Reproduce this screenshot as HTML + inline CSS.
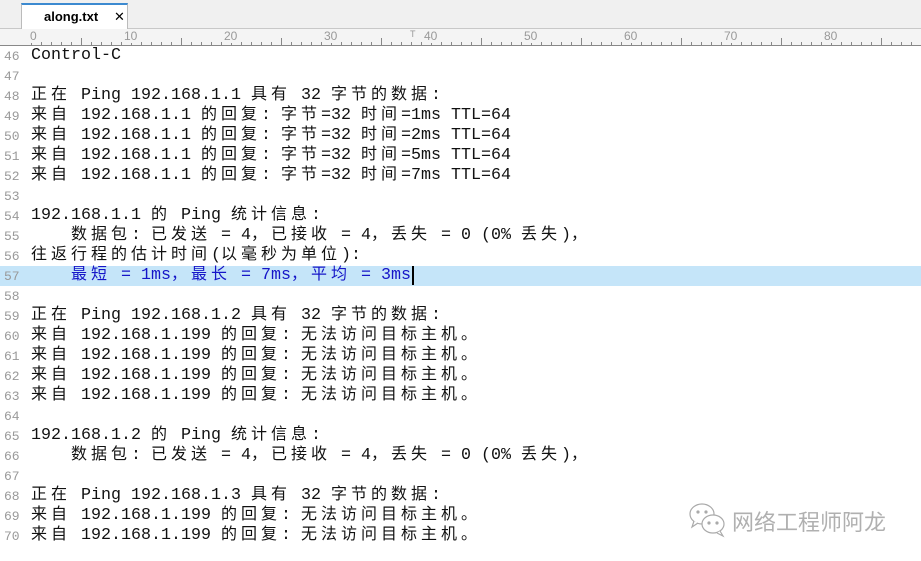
<!DOCTYPE html>
<html><head><meta charset="utf-8"><style>
body{margin:0;width:921px;height:561px;background:#fff;overflow:hidden;position:relative;font-family:"Liberation Mono","Noto Sans CJK SC",monospace}
.top{position:absolute;left:0;top:0;width:921px;height:28px;background:#f0f0f0;border-bottom:1px solid #c8c8c8}
.tab{position:absolute;left:21px;top:3px;width:107px;height:26px;background:#fff;border-top:2px solid #3c8ad0;border-left:1px solid #bbb;border-right:1px solid #bbb;box-sizing:border-box;font:bold 13px "Liberation Sans",sans-serif;color:#000}
.tab span{position:absolute;left:22px;top:4px}
.tab b{position:absolute;left:92px;top:4px;font-weight:normal;font-size:13px}
.ruler{position:absolute;left:0;top:29px;width:921px;height:16px;background:#f4f4f4;border-bottom:1px solid #888}
.ticks{position:absolute;left:31px;bottom:0;width:890px;height:3px;background:repeating-linear-gradient(90deg,#888 0,#888 1px,transparent 1px,transparent 10px)}
.ticks5{position:absolute;left:81px;bottom:0;width:840px;height:7px;background:repeating-linear-gradient(90deg,#888 0,#888 1px,transparent 1px,transparent 100px)}
.rl{position:absolute;top:0;font:12px "Liberation Sans",sans-serif;color:#999;background:#f4f4f4;padding:0 1px}
.code{position:absolute;left:0;top:46px;width:921px}
.ln{height:20px;line-height:20px;position:relative;white-space:pre;font-size:16.67px;color:#111}
.ln .n{position:absolute;left:4px;top:1px;font-size:13px;color:#999;width:24px}
.ln .t{position:absolute;left:31px;top:0;height:20px;line-height:20px}
i{font-style:normal;font-family:"Noto Sans CJK SC",sans-serif;font-size:16px;letter-spacing:4px;line-height:10px}
.hl{background:#c5e5f9}
.hl .t{color:#1515c8}
.wm{position:absolute;left:732px;top:505px;color:#b0b0b0;font:22px "Noto Sans CJK SC",sans-serif}
</style></head><body>
<div class="top"><div class="tab"><span>along.txt</span><b>✕</b></div></div>
<div class="ruler"><div class="ticks"></div><div class="ticks5"></div>
<div class="rl" style="left:29px">0</div><div class="rl" style="left:123px">10</div><div class="rl" style="left:223px">20</div><div class="rl" style="left:323px">30</div><div class="rl" style="left:423px">40</div><div class="rl" style="left:523px">50</div><div class="rl" style="left:623px">60</div><div class="rl" style="left:723px">70</div><div class="rl" style="left:823px">80</div><div class="rl" style="left:409px;font-size:9px">T</div></div>
<div class="code">
<div class="ln"><span class="n">46</span><span class="t">Control-C</span></div>
<div class="ln"><span class="n">47</span></div>
<div class="ln"><span class="n">48</span><span class="t"><i>正在</i> Ping 192.168.1.1 <i>具有</i> 32 <i>字节的数据</i>:</span></div>
<div class="ln"><span class="n">49</span><span class="t"><i>来自</i> 192.168.1.1 <i>的回复</i>: <i>字节</i>=32 <i>时间</i>=1ms TTL=64</span></div>
<div class="ln"><span class="n">50</span><span class="t"><i>来自</i> 192.168.1.1 <i>的回复</i>: <i>字节</i>=32 <i>时间</i>=2ms TTL=64</span></div>
<div class="ln"><span class="n">51</span><span class="t"><i>来自</i> 192.168.1.1 <i>的回复</i>: <i>字节</i>=32 <i>时间</i>=5ms TTL=64</span></div>
<div class="ln"><span class="n">52</span><span class="t"><i>来自</i> 192.168.1.1 <i>的回复</i>: <i>字节</i>=32 <i>时间</i>=7ms TTL=64</span></div>
<div class="ln"><span class="n">53</span></div>
<div class="ln"><span class="n">54</span><span class="t">192.168.1.1 <i>的</i> Ping <i>统计信息</i>:</span></div>
<div class="ln"><span class="n">55</span><span class="t">    <i>数据包</i>: <i>已发送</i> = 4<i>，已接收</i> = 4<i>，丢失</i> = 0 (0% <i>丢失</i>)<i>，</i></span></div>
<div class="ln"><span class="n">56</span><span class="t"><i>往返行程的估计时间</i>(<i>以毫秒为单位</i>):</span></div>
<div class="ln hl"><span class="n">57</span><span class="t">    <i>最短</i> = 1ms<i>，最长</i> = 7ms<i>，平均</i> = 3ms<span style="border-left:2px solid #000;margin-left:1px"></span></span></div>
<div class="ln"><span class="n">58</span></div>
<div class="ln"><span class="n">59</span><span class="t"><i>正在</i> Ping 192.168.1.2 <i>具有</i> 32 <i>字节的数据</i>:</span></div>
<div class="ln"><span class="n">60</span><span class="t"><i>来自</i> 192.168.1.199 <i>的回复</i>: <i>无法访问目标主机。</i></span></div>
<div class="ln"><span class="n">61</span><span class="t"><i>来自</i> 192.168.1.199 <i>的回复</i>: <i>无法访问目标主机。</i></span></div>
<div class="ln"><span class="n">62</span><span class="t"><i>来自</i> 192.168.1.199 <i>的回复</i>: <i>无法访问目标主机。</i></span></div>
<div class="ln"><span class="n">63</span><span class="t"><i>来自</i> 192.168.1.199 <i>的回复</i>: <i>无法访问目标主机。</i></span></div>
<div class="ln"><span class="n">64</span></div>
<div class="ln"><span class="n">65</span><span class="t">192.168.1.2 <i>的</i> Ping <i>统计信息</i>:</span></div>
<div class="ln"><span class="n">66</span><span class="t">    <i>数据包</i>: <i>已发送</i> = 4<i>，已接收</i> = 4<i>，丢失</i> = 0 (0% <i>丢失</i>)<i>，</i></span></div>
<div class="ln"><span class="n">67</span></div>
<div class="ln"><span class="n">68</span><span class="t"><i>正在</i> Ping 192.168.1.3 <i>具有</i> 32 <i>字节的数据</i>:</span></div>
<div class="ln"><span class="n">69</span><span class="t"><i>来自</i> 192.168.1.199 <i>的回复</i>: <i>无法访问目标主机。</i></span></div>
<div class="ln"><span class="n">70</span><span class="t"><i>来自</i> 192.168.1.199 <i>的回复</i>: <i>无法访问目标主机。</i></span></div>
</div>
<svg style="position:absolute;left:688px;top:502px" width="40" height="36" viewBox="0 0 40 36" fill="#fff" stroke="#aaa" stroke-width="1.2"><ellipse cx="14" cy="12" rx="12" ry="10"/><path d="M6 19 l-2 6 6-4"/><ellipse cx="25" cy="22" rx="11" ry="9"/><path d="M32 29 l3 5 -6-3"/><circle cx="10" cy="10" r="1" fill="#aaa"/><circle cx="18" cy="10" r="1" fill="#aaa"/><circle cx="21" cy="21" r="1" fill="#aaa"/><circle cx="29" cy="21" r="1" fill="#aaa"/></svg>
<div class="wm">网络工程师阿龙</div>
</body></html>
